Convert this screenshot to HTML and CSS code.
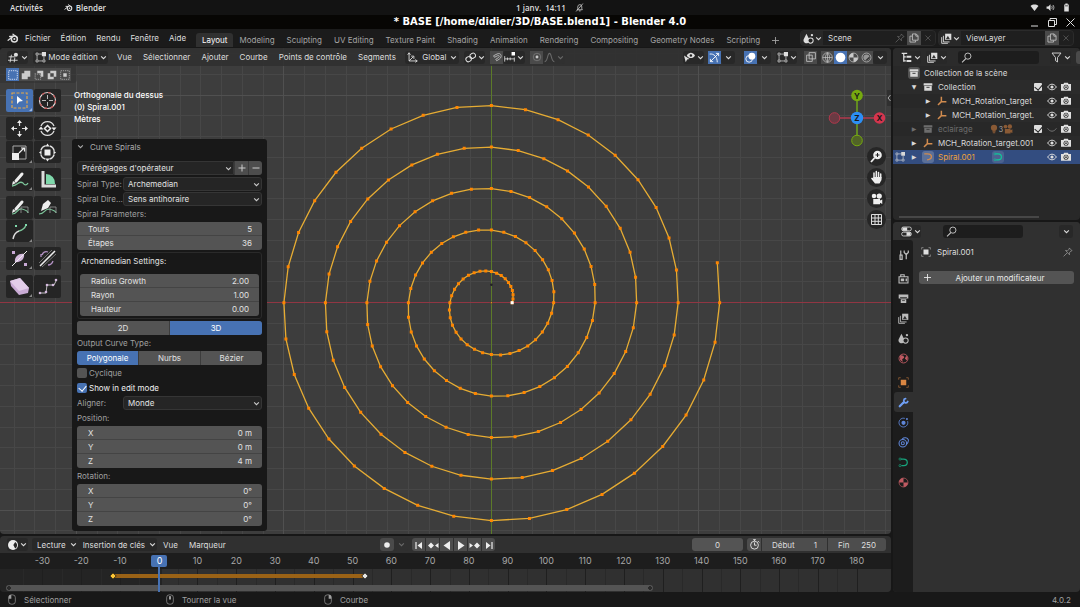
FILE: index.html
```html
<!DOCTYPE html>
<html lang="fr">
<head>
<meta charset="utf-8">
<title>* BASE [/home/didier/3D/BASE.blend1] - Blender 4.0</title>
<link rel="stylesheet" href="styles.css">
</head>
<body>
<svg class="defs" aria-hidden="true">
  <symbol id="blender" viewBox="0 0 16 16"><path d="M1.500 11 8 6H3.500M8 3l5 4" fill="none" stroke="currentColor" stroke-width="1.700" stroke-linecap="round" stroke-linejoin="round"/><circle cx="9.800" cy="9.300" r="4" fill="none" stroke="currentColor" stroke-width="2"/><circle cx="9.800" cy="9.300" r="1.400" fill="currentColor"/></symbol>
  <symbol id="chev" viewBox="0 0 8 8"><path d="M1.300 2.600 4 5.300l2.700-2.700" fill="none" stroke="currentColor" stroke-width="1.200"/></symbol>
  <symbol id="bell" viewBox="0 0 16 16"><path d="M4 12c1-1 1-3 1-5 0-2.500 1.300-4 3.500-4S12 4.500 12 7c0 2 0 4 1 5zM7 14h3M2 15 14 1" fill="none" stroke="currentColor" stroke-width="1.300"/></symbol>
  <symbol id="wifi" viewBox="0 0 16 16"><path d="M8 14 1 5.500C5 2 11 2 15 5.500z" fill="currentColor"/></symbol>
  <symbol id="sound" viewBox="0 0 16 16"><path d="M1 6h3l4-4v12l-4-4H1z" fill="currentColor"/><path d="M10 5.500c1.300 1.500 1.300 3.500 0 5M12.200 3.500c2.400 2.700 2.400 6.300 0 9" fill="none" stroke="currentColor" stroke-width="1.400"/></symbol>
  <symbol id="battery" viewBox="0 0 16 16"><path d="M6 1h4v1.500h2V15H4V2.500h2z" fill="currentColor"/><path d="M5.500 4h5v2h-5z" fill="#555"/></symbol>
  <symbol id="grid-editor" viewBox="0 0 16 16"><path d="M1 7h9M0 12h14M5 4 3 15M10 8l-1 7" fill="none" stroke="currentColor" stroke-width="1.300"/><circle cx="11.500" cy="4" r="3" fill="currentColor"/></symbol>
  <symbol id="edit-mode" viewBox="0 0 16 16"><path d="M5 3h6M3 5v6M5 13h6M13 6v5" fill="none" stroke="currentColor" stroke-width="1"/><path d="M1.500 1.500h3v3h-3zM1.500 11.500h3v3h-3zM11.500 11.500h3v3h-3z" fill="none" stroke="currentColor"/><path d="M10 0h6v6h-6z" fill="currentColor"/></symbol>
  <symbol id="axes" viewBox="0 0 16 16"><path d="M3 2v11h11M3 13l6-6M1 4l2-3 2 3M12 11l3 2-3 2M6 6h4v4" fill="none" stroke="currentColor" stroke-width="1.300"/></symbol>
  <symbol id="pivot" viewBox="0 0 16 16"><g fill="none" stroke="currentColor" stroke-width="1.500"><rect x="1" y="7" width="8" height="7" rx="3.500" transform="rotate(-30 5 10)"/><rect x="7" y="2" width="8" height="7" rx="3.500" transform="rotate(-30 11 5)"/></g><circle cx="8" cy="8" r="1.500" fill="currentColor"/></symbol>
  <symbol id="magnet" viewBox="0 0 16 16"><path d="M2.500 6 8 3.200c7-3 9 5 3.500 8.300l-4 2.500M4 8.500l5-2.600c3-1.200 3.500 1.500 1 3.200l-4 2.600M2.500 6 4 8.500M6 11.700 7.500 14" fill="none" stroke="currentColor" stroke-width="1.300"/></symbol>
  <symbol id="snap-inc" viewBox="0 0 16 16"><path d="M1 6v8M15 8v6M5 8v4M9 8v4M1 10h14" fill="none" stroke="currentColor" stroke-width="1.200"/><path d="M11 0h5v5h-5z" fill="#fff"/></symbol>
  <symbol id="prop" viewBox="0 0 16 16"><circle cx="8" cy="8" r="6" fill="none" stroke="currentColor" stroke-width=".5"/><circle cx="8" cy="8" r="2.300" fill="currentColor"/></symbol>
  <symbol id="falloff" viewBox="0 0 16 16"><path d="M1 14c5 0 3.500-12 7-12s2 12 7 12" fill="none" stroke="currentColor" stroke-width="1.500"/></symbol>
  <symbol id="visib" viewBox="0 0 16 16"><path d="M0 5l8 5-3.500 1L2.500 15z" fill="currentColor"/><path d="M4 5c3-5 9-5 12 0-3 5-9 5-12 0z" fill="currentColor"/><circle cx="10" cy="5" r="1.800" fill="#222"/></symbol>
  <symbol id="gizmo" viewBox="0 0 16 16"><path d="M1 3c6-1 11 4 11 12M2 14 14 2M10 2h4v4M2 10v4h4" fill="none" stroke="currentColor" stroke-width="1.300"/></symbol>
  <symbol id="overlay" viewBox="0 0 16 16"><circle cx="6" cy="10" r="4.800" fill="none" stroke="currentColor" stroke-width="1.300"/><circle cx="10" cy="6" r="5" fill="currentColor"/></symbol>
  <symbol id="xray" viewBox="0 0 16 16"><path d="M1 5h9v10H1zM5 1h10v10H5z" fill="none" stroke="currentColor" stroke-width="1.300"/></symbol>
  <symbol id="wire" viewBox="0 0 16 16"><path d="M8 1v14M1 8h14M8 1c-4 4-4 10 0 14M8 1c4 4 4 10 0 14" fill="none" stroke="currentColor"/><circle cx="8" cy="8" r="7" fill="none" stroke="currentColor"/></symbol>
  <symbol id="solid" viewBox="0 0 16 16"><circle cx="8" cy="8" r="7" fill="#fff"/></symbol>
  <symbol id="matprev" viewBox="0 0 16 16"><circle cx="8" cy="8" r="6.500" fill="none" stroke="currentColor"/><path d="M8 8V1.500A6.500 6.500 0 0 0 1.500 8zM8 8h6.500A6.500 6.500 0 0 1 8 14.500z" fill="currentColor"/></symbol>
  <symbol id="rendered" viewBox="0 0 16 16"><circle cx="8" cy="8" r="6.500" fill="none" stroke="currentColor"/><circle cx="8" cy="8" r="4.500" fill="currentColor" opacity=".6"/><path d="M6 12.500 12.500 6v3L9 12.500z" fill="#333"/></symbol>
  <symbol id="copy" viewBox="0 0 16 16"><path d="M5.500 1.500h6l3 3v7h-9zM11 1.500V5h3.500M5 5H1.500v9.500h9V12" fill="none" stroke="currentColor" stroke-width="1.300"/></symbol>
  <symbol id="x" viewBox="0 0 16 16"><path d="M3 3l10 10M13 3 3 13" stroke="currentColor" stroke-width="1.300"/></symbol>
  <symbol id="pin" viewBox="0 0 16 16"><path d="M10 1.500 14.500 6l-2 .500-2.500 3 .500 3L4 5.500l3 .500 3-2.500zM6.500 9.500 1 15" fill="none" stroke="currentColor" stroke-width="1.200"/></symbol>
  <symbol id="scene" viewBox="0 0 16 16"><path d="M5 1l4 8c1 3-1 6-4 6s-5-3-4-6z" fill="currentColor"/><circle cx="11" cy="11" r="3.800" fill="#222" stroke="currentColor" stroke-width="1.500"/><circle cx="13" cy="3" r="1.700" fill="currentColor"/></symbol>
  <symbol id="layers" viewBox="0 0 16 16"><path d="M1 6v9h9M3.500 4v9h9" fill="none" stroke="currentColor" stroke-width="1.300"/><path d="M6 1h9v9H6z" fill="currentColor"/><path d="M7 9l3-5 3 5z" fill="#333"/></symbol>
  <symbol id="tree" viewBox="0 0 16 16"><path d="M1 2h8M4 3v11M4 7h3M4 13h3" fill="none" stroke="currentColor" stroke-width="1.800"/><path d="M8 5.500h7v3H8zM8 11.500h7v3H8z" fill="currentColor"/></symbol>
  <symbol id="lens" viewBox="0 0 16 16"><circle cx="10" cy="6" r="4.500" fill="none" stroke="currentColor" stroke-width="1.300"/><path d="M7 9.500 1.500 15" stroke="currentColor" stroke-width="1.500"/></symbol>
  <symbol id="funnel" viewBox="0 0 16 16"><path d="M1.500 1.500h13L9.500 8v6.500l-3-2V8z" fill="none" stroke="currentColor" stroke-width="1.300"/></symbol>
  <symbol id="coll" viewBox="0 0 16 16"><path d="M1 2h14v3.500H1zM2 6.500h12V14H2z" fill="currentColor"/><path d="M5.500 8.500h5" stroke="#333" stroke-width="1.500"/></symbol>
  <symbol id="empty" viewBox="0 0 16 16"><path d="M7 1v8h8M7 9l-5.500 5.500" fill="none" stroke="currentColor" stroke-width="2.400"/></symbol>
  <symbol id="curve" viewBox="0 0 16 16"><path d="M2 3h5c4.500 0 6.500 1.800 6.500 4.500S11 12 6.500 12.500" fill="none" stroke="currentColor" stroke-width="2.200"/></symbol>
  <symbol id="curvedata" viewBox="0 0 16 16"><path d="M4 3h4c3.500 0 5.500 2 5.500 5s-2.500 4.500-5 4.500H5" fill="none" stroke="currentColor" stroke-width="1.800"/><circle cx="3" cy="3" r="1.600" fill="none" stroke="currentColor"/><circle cx="3" cy="12.500" r="1.600" fill="none" stroke="currentColor"/></symbol>
  <symbol id="eye" viewBox="0 0 16 16"><path d="M1 8c4-6 10-6 14 0-4 6-10 6-14 0z" fill="none" stroke="currentColor" stroke-width="1.500"/><circle cx="8" cy="8" r="2.500" fill="currentColor"/></symbol>
  <symbol id="eye-off" viewBox="0 0 16 16"><path d="M1 7c4 6 10 6 14 0" fill="none" stroke="currentColor" stroke-width="1.500"/></symbol>
  <symbol id="cam" viewBox="0 0 16 16"><path d="M0 3h4l1-2h6l1 2h4v11H0z" fill="currentColor"/><circle cx="8" cy="8.300" r="4" fill="#333"/><circle cx="8" cy="8.300" r="2.200" fill="none" stroke="currentColor" stroke-width="1.500"/></symbol>
  <symbol id="movie" viewBox="0 0 16 16"><circle cx="4" cy="4" r="3" fill="currentColor"/><circle cx="11" cy="4" r="3.500" fill="currentColor"/><path d="M3 8h9v2l3-1.500v6L12 13v2H3z" fill="currentColor"/></symbol>
  <symbol id="bulb" viewBox="0 0 16 16"><circle cx="8" cy="6" r="5" fill="currentColor"/><path d="M5.500 11.500h5M6 14h4" stroke="currentColor" stroke-width="1.800"/></symbol>
  <symbol id="props" viewBox="0 0 16 16"><rect x="1" y="1.500" width="14" height="5.500" rx="2.500" fill="none" stroke="currentColor" stroke-width="1.200"/><rect x="1" y="9" width="14" height="5.500" rx="2.500" fill="none" stroke="currentColor" stroke-width="1.200"/><path d="M2 2h7v5H2zM8 9h6v5H8z" fill="currentColor"/></symbol>
  <symbol id="tool" viewBox="0 0 16 16"><path d="M4 2v6M3 9h3v6H3zM12 8v7" stroke="currentColor" stroke-width="1.800" fill="none"/><path d="M9 2v3l3 3 3-3V2" fill="none" stroke="currentColor" stroke-width="1.800"/></symbol>
  <symbol id="render" viewBox="0 0 16 16"><path d="M1.500 5.500h13v9h-13zM4 5V2.500h5V5" fill="none" stroke="currentColor" stroke-width="1.600"/><path d="M4 8h5v4H4zM11 8h2v4h-2z" fill="currentColor"/></symbol>
  <symbol id="output" viewBox="0 0 16 16"><path d="M1 2h14v6H1zM4 9h8v5.500H4z" fill="currentColor"/><path d="M3 6.500h10M6 11h4" stroke="#333" stroke-width="1.200"/></symbol>
  <symbol id="world" viewBox="0 0 16 16"><circle cx="8" cy="8" r="6.500" fill="none" stroke="currentColor" stroke-width="1.300"/><path d="M3 3l5 1 1 3-3 2 1 4-4-3zM12 4l2 3-1 4-3-3z" fill="currentColor"/></symbol>
  <symbol id="object" viewBox="0 0 16 16"><path d="M4 4h8v8H4z" fill="currentColor"/><path d="M1 4V1h3M12 1h3v3M15 12v3h-3M4 15H1v-3" fill="none" stroke="currentColor" opacity=".7"/></symbol>
  <symbol id="wrench" viewBox="0 0 16 16"><path d="M2.500 13.500 8 8" stroke="currentColor" stroke-width="3.200" stroke-linecap="round"/><path d="M11 2.500a3 3 0 1 0 3.200 4" fill="none" stroke="currentColor" stroke-width="2.600" stroke-linecap="round"/></symbol>
  <symbol id="physics" viewBox="0 0 16 16"><path d="M10 2a6.500 6.500 0 1 0 4 4" fill="none" stroke="currentColor" stroke-width="1.200"/><circle cx="8" cy="8.500" r="3" fill="currentColor"/><circle cx="13" cy="3" r="1.500" fill="currentColor"/></symbol>
  <symbol id="constraint" viewBox="0 0 16 16"><circle cx="7" cy="9" r="5.500" fill="none" stroke="currentColor" stroke-width="1.500"/><circle cx="7" cy="9" r="2.200" fill="none" stroke="currentColor" stroke-width="1.500"/><path d="M6 3c3-3 8-2 9 1s-1 5-3 7" fill="none" stroke="currentColor" stroke-width="1.500"/></symbol>
  <symbol id="clock" viewBox="0 0 16 16"><circle cx="8" cy="8" r="8" fill="#eee"/><path d="M11.500 3 8.500 8l3 5.500c4-2.500 4-8 0-10.500z" fill="#282828"/></symbol>
  <symbol id="stopwatch" viewBox="0 0 16 16"><circle cx="8" cy="9" r="5.700" fill="none" stroke="currentColor" stroke-width="1.400"/><path d="M8 5v4h3M6 1h4M8 1v2M13 3l2 2" fill="none" stroke="currentColor" stroke-width="1.400"/></symbol>
  <symbol id="mouse-l" viewBox="0 0 12 16"><rect x="1" y="1" width="10" height="14" rx="4" fill="none" stroke="currentColor"/><path d="M1 7V4q0-3 4-3v6z" fill="currentColor"/></symbol>
  <symbol id="mouse-m" viewBox="0 0 12 16"><rect x="1" y="1" width="10" height="14" rx="4" fill="none" stroke="currentColor"/><rect x="4.500" y="3" width="3" height="5" fill="currentColor"/></symbol>
  <symbol id="mouse-r" viewBox="0 0 12 16"><rect x="1" y="1" width="10" height="14" rx="4" fill="none" stroke="currentColor"/><path d="M11 7V4q0-3-4-3v6z" fill="currentColor"/></symbol>
</svg>

<header class="gnome">
  <button>Activités</button>
  <button class="gnome-app"><svg class="i9"><use href="#blender"/></svg>Blender</button>
  <div class="gnome-clock"><time>1 janv.&nbsp; 14:11</time><svg class="i9"><use href="#bell"/></svg></div>
  <div class="gnome-status"><svg class="i9"><use href="#wifi"/></svg><svg class="i9"><use href="#sound"/></svg><svg class="i9"><use href="#battery"/></svg></div>
</header>

<div class="titlebar">
  <h1>* BASE [/home/didier/3D/BASE.blend1] - Blender 4.0</h1>
  <div class="win">
    <button aria-label="Réduire"><svg class="i9" viewBox="0 0 9 9"><path d="M1 8h7" stroke="#ddd"/></svg></button>
    <button aria-label="Agrandir"><svg class="i9" viewBox="0 0 9 9"><path d="M.5 2.500h6v6h-6zM2 2.500v-2h6.500v6h-2" fill="none" stroke="#ddd"/></svg></button>
    <button aria-label="Fermer"><svg class="i9" viewBox="0 0 9 9"><path d="M.5.500l8 8M8.500.500l-8 8" stroke="#ddd"/></svg></button>
  </div>
</div>

<nav class="topbar">
  <svg class="logo"><use href="#blender"/></svg>
  <div class="menus"><button>Fichier</button><button>Édition</button><button>Rendu</button><button>Fenêtre</button><button>Aide</button></div>
  <div class="tabs">
    <button class="on">Layout</button><button>Modeling</button><button>Sculpting</button><button>UV Editing</button><button>Texture Paint</button><button>Shading</button><button>Animation</button><button>Rendering</button><button>Compositing</button><button>Geometry Nodes</button><button>Scripting</button><button class="plus" aria-label="Ajouter un espace"><svg class="i7" viewBox="0 0 8 8"><path d="M4 0v8M0 4h8" stroke="currentColor"/></svg></button>
  </div>
  <div class="idblock">
    <button class="id-type" aria-label="Scène"><svg class="i11"><use href="#scene"/></svg><svg class="chev"><use href="#chev"/></svg></button>
    <input value="Scene" aria-label="Nom de la scène">
    <button class="ghost" aria-label="Épingler"><svg class="i10"><use href="#pin"/></svg></button>
    <button class="lit" aria-label="Nouvelle scène"><svg class="i10"><use href="#copy"/></svg></button>
    <button class="ghost" aria-label="Supprimer"><svg class="i8"><use href="#x"/></svg></button>
  </div>
  <div class="idblock">
    <button class="id-type" aria-label="Calque"><svg class="i11"><use href="#layers"/></svg><svg class="chev"><use href="#chev"/></svg></button>
    <input value="ViewLayer" aria-label="Nom du calque">
    <button class="lit" aria-label="Nouveau calque"><svg class="i10"><use href="#copy"/></svg></button>
    <button class="ghost" aria-label="Supprimer"><svg class="i8"><use href="#x"/></svg></button>
  </div>
</nav>

<main class="workspace">
  <div class="left">
    <section class="viewport area">
      <svg class="scene" id="scene-view" viewBox="0 0 891 486" preserveAspectRatio="xMidYMid slice"></svg>

      <div class="vheader">
        <button class="box wide" aria-label="Type d'éditeur"><svg class="i11"><use href="#grid-editor"/></svg><svg class="chev"><use href="#chev"/></svg></button>
        <button class="box mode"><svg class="i11"><use href="#edit-mode"/></svg><span>Mode édition</span><svg class="chev"><use href="#chev"/></svg></button>
        <div class="vmenus"><button>Vue</button><button>Sélectionner</button><button>Ajouter</button><button>Courbe</button><button>Points de contrôle</button><button>Segments</button></div>
        <div class="vmid">
          <button class="box orient"><svg class="i11"><use href="#axes"/></svg><span>Global</span><svg class="chev"><use href="#chev"/></svg></button>
          <button class="box wide" aria-label="Pivot"><svg class="i11"><use href="#pivot"/></svg><svg class="chev"><use href="#chev"/></svg></button>
          <div class="pair"><button class="sq lit" aria-label="Aimanter"><svg class="i10"><use href="#magnet"/></svg></button><button class="box" aria-label="Incrément"><svg class="i11"><use href="#snap-inc"/></svg><svg class="chev"><use href="#chev"/></svg></button></div>
          <div class="pair"><button class="sq lit" aria-label="Édition proportionnelle"><svg class="i10"><use href="#prop"/></svg></button><button class="box dim" aria-label="Atténuation"><svg class="i11"><use href="#falloff"/></svg><svg class="chev"><use href="#chev"/></svg></button></div>
        </div>
        <div class="vright">
          <button class="box wide" aria-label="Visibilité"><svg class="i11"><use href="#visib"/></svg><svg class="chev"><use href="#chev"/></svg></button>
          <div class="pair"><button class="sq blue" aria-label="Gizmos"><svg class="i11"><use href="#gizmo"/></svg></button><button class="box arrow" aria-label="Options des gizmos"><svg class="chev"><use href="#chev"/></svg></button></div>
          <div class="pair gapped"><button class="sq blue" aria-label="Surimpressions"><svg class="i11"><use href="#overlay"/></svg></button><button class="box arrow" aria-label="Options des surimpressions"><svg class="chev"><use href="#chev"/></svg></button></div>
          <button class="box wide" aria-label="Surimpression d'édition"><svg class="i11"><use href="#edit-mode"/></svg><svg class="chev"><use href="#chev"/></svg></button>
          <button class="sq lit xr" aria-label="Rayons X"><svg class="i10"><use href="#xray"/></svg></button>
          <div class="pair"><button class="sq lit" aria-label="Filaire"><svg class="i11"><use href="#wire"/></svg></button><button class="sq blue" aria-label="Solide"><svg class="i11"><use href="#solid"/></svg></button><button class="sq lit" aria-label="Matériau"><svg class="i11"><use href="#matprev"/></svg></button><button class="sq lit" aria-label="Rendu"><svg class="i11"><use href="#rendered"/></svg></button><button class="box arrow" aria-label="Options d'ombrage"><svg class="chev"><use href="#chev"/></svg></button></div>
        </div>
      </div>

      <div class="selmodes">
        <button class="on" aria-label="Définir"><svg viewBox="0 0 14 14"><path d="M2 2h10v10H2z" fill="none" stroke="#dfe8f8" stroke-dasharray="1.500 1"/></svg></button>
        <button aria-label="Étendre"><svg viewBox="0 0 14 14"><path d="M5 2h7v7H9v3H2V5h3z" fill="#ccc"/></svg></button>
        <button aria-label="Soustraire"><svg viewBox="0 0 14 14"><path d="M5 2h7v7H9V5H5z" fill="#ccc"/><path d="M2.500 5v7H9V6H3" fill="none" stroke="#aaa" stroke-dasharray="1.500 1"/></svg></button>
        <button aria-label="Inverser"><svg viewBox="0 0 14 14"><path d="M5 2h7v7H9v3H2V5h3zM5 5v4h4V5z" fill="#ccc" fill-rule="evenodd"/></svg></button>
        <button aria-label="Intersecter"><svg viewBox="0 0 14 14"><path d="M2 2h10v10H2z" fill="none" stroke="#aaa" stroke-dasharray="1.500 1"/><path d="M5 5h4v4H5z" fill="#ccc"/></svg></button>
      </div>

      <div class="viewtext"><span>Orthogonale du dessus</span><span>(0) Spiral.001</span><span>Mètres</span></div>

      <div class="tools">
        <div class="tgroup">
          <button class="on" aria-label="Sélection"><svg viewBox="0 0 27 23"><path d="M6 4h15v15H6z" fill="none" stroke="#e5a74a" stroke-width="1.200" stroke-dasharray="3 1.500"/><path d="M11 7l6 5-3.500.500L11 15z" fill="#fff"/><path d="M26 19v3h-3z" fill="#9db6dd"/></svg></button>
          <button aria-label="Curseur"><svg viewBox="0 0 27 23"><circle cx="13.500" cy="11.500" r="8" fill="none" stroke="#ddd" stroke-width="1.200"/><circle cx="13.500" cy="11.500" r="8" fill="none" stroke="#c55" stroke-width="1.200" stroke-dasharray="3 3.300"/><path d="M13.500 6v4M13.500 13v4M8 11.500h4M15 11.500h4" stroke="#bbb"/></svg></button>
        </div>
        <div class="tgroup">
          <button aria-label="Déplacer"><svg viewBox="0 0 27 23"><path d="M13.500 6v3M13.500 14v3M8 11.500h3M16 11.500h3" stroke="#ddd" stroke-width="1.200"/><path d="M13.500 3l2.500 3h-5zM13.500 20l2.500-3h-5zM5 11.500l3-2.500v5zM22 11.500 19 9v5z" fill="#eee"/></svg></button>
          <button aria-label="Tourner"><svg viewBox="0 0 27 23"><path d="M7 9a7 7 0 0 1 13 0M20 14a7 7 0 0 1-13 0" fill="none" stroke="#ddd" stroke-width="1.300"/><path d="M13.500 8.500l3 3-3 3-3-3z" fill="none" stroke="#eee" stroke-width="1.500"/><path d="M4.500 12.500h5L7 9.500zM17.500 10.500h5L20 13.500z" fill="#eee"/></svg></button>
          <button aria-label="Échelle"><svg viewBox="0 0 27 23"><path d="M7 5h13v13H7z" fill="none" stroke="#aaa"/><path d="M6 12h7v7H6z" fill="#eee"/><path d="M13 12l5-5M15 7h3.500v3.500" fill="none" stroke="#eee" stroke-width="1.200"/><path d="M26 19v3h-3z" fill="#888"/></svg></button>
          <button aria-label="Transformer"><svg viewBox="0 0 27 23"><circle cx="13.500" cy="11.500" r="7" fill="none" stroke="#ddd" stroke-width="1.300" stroke-dasharray="7 4" stroke-dashoffset="-2"/><path d="M10.500 8.500h6v6h-6zM13.500 2.500l2 3h-4zM13.500 20.500l2-3h-4zM5 11.500l2.500-2v4zM22 11.500l-2.500-2v4z" fill="#eee"/></svg></button>
        </div>
        <div class="tgroup">
          <button aria-label="Annoter"><svg viewBox="0 0 27 23"><path d="M10 13 16 6" stroke="#eee" stroke-width="3" stroke-linecap="round"/><path d="M6 17l1-4 3 2z" fill="#eee"/><path d="M6 18c7-1 7-6 11-3 2 3 4 2 5 0" fill="none" stroke="#7cc59a" stroke-width="1.300"/><path d="M26 19v3h-3z" fill="#888"/></svg></button>
          <button aria-label="Mesurer"><svg viewBox="0 0 27 23"><path d="M9 3v15h13" fill="none" stroke="#ddd" stroke-width="3"/><path d="M12 6a9 9 0 0 1 9 10h-9z" fill="#7fd8ab"/></svg></button>
        </div>
        <div class="tgroup">
          <button aria-label="Dessiner"><svg viewBox="0 0 27 23"><path d="M10 13 16 6" stroke="#eee" stroke-width="3" stroke-linecap="round"/><path d="M6 18c6 0 5-6 10-5 4 1 6 2 6 4" fill="none" stroke="#7cc59a" stroke-width="1.200"/><path d="M15 17v-6h7v6" fill="none" stroke="#999" stroke-width=".8"/><path d="M6 17l1-4 3 2z" fill="#eee"/></svg></button>
          <button aria-label="Plume"><svg viewBox="0 0 27 23"><path d="M7 15l2-7 5-4 3 3-3 5z" fill="#eee"/><path d="M5 18c6 0 5-5 10-5 4 1 7 2 7 4" fill="none" stroke="#7cc59a" stroke-width="1.200"/><path d="M16 17v-6h6v6" fill="none" stroke="#999" stroke-width=".8"/></svg></button>
          <button aria-label="Extruder"><svg viewBox="0 0 27 23"><path d="M7 19c1-5 3-7 6-8" fill="none" stroke="#ddd" stroke-width="1.400"/><path d="M13 11c4-1 6-3 7-6" fill="none" stroke="#7cc59a" stroke-width="1.400"/><path d="M9 5h2v2H9zM19 4h2v2h-2z" fill="#7fd8ab"/><path d="M26 19v3h-3z" fill="#888"/></svg></button>
        </div>
        <div class="tgroup">
          <button aria-label="Rayon"><svg viewBox="0 0 27 23"><path d="M9 15c-1-5 4-9 9-8 1 5-4 9-9 8z" fill="#d4b9dd"/><path d="M6 19 21 4" stroke="#eee"/><path d="M6 4h3v3H6zM18 16h3v3h-3z" fill="#c9a9d6"/><path d="M26 19v3h-3z" fill="#888"/></svg></button>
          <button aria-label="Inclinaison"><svg viewBox="0 0 27 23"><path d="M6 19 21 4" stroke="#eee" stroke-width="1.500"/><path d="M8 20 22 7M5 16 18 3" stroke="#888" stroke-width=".8"/><path d="M8 8c1-3 3-4 6-3M19 14c-1 3-3 4-5 4M7 7v3" fill="none" stroke="#b391c4" stroke-width="1.300"/></svg></button>
        </div>
        <div class="tgroup">
          <button aria-label="Cisailler"><svg viewBox="0 0 27 23"><path d="M4 6l10-3 9 10-1 5-9 2L5 11z" fill="#c9abd5"/><path d="M4 6l10-3 9 10-10 3z" fill="#e2cde9"/><path d="M26 19v3h-3z" fill="#888"/></svg></button>
          <button aria-label="Aléatoire"><svg viewBox="0 0 27 23"><path d="M6 18h6l1-8 7 0 2-4" fill="none" stroke="#bbb"/><g fill="#d4b9dd"><circle cx="6" cy="18" r="1.300"/><circle cx="12" cy="17" r="1.300"/><circle cx="13" cy="10" r="1.300"/><circle cx="19" cy="10" r="1.300"/><circle cx="22" cy="5" r="1.300"/></g></svg></button>
        </div>
      </div>

      <form class="oppanel">
        <h2><svg class="chev"><use href="#chev"/></svg>Curve Spirals</h2>
        <div class="row preset"><select aria-label="Préréglages"><option>Préréglages d'opérateur</option></select><button type="button" aria-label="Ajouter"><svg class="i8" viewBox="0 0 8 8"><path d="M4 .5v7M.5 4h7" stroke="#ccc"/></svg></button><button type="button" aria-label="Retirer"><svg class="i8" viewBox="0 0 8 8"><path d="M.5 4h7" stroke="#ccc"/></svg></button></div>
        <div class="row prop1"><label for="st">Spiral Type:</label><select id="st"><option>Archemedian</option></select></div>
        <div class="row prop1"><label for="sd">Spiral Dire...</label><select id="sd"><option>Sens antihoraire</option></select></div>
        <p>Spiral Parameters:</p>
        <div class="nums"><label>Tours<input value="5"></label><label>Étapes<input value="36"></label></div>
        <fieldset>
          <legend>Archemedian Settings:</legend>
          <div class="nums"><label>Radius Growth<input value="2.00"></label><label>Rayon<input value="1.00"></label><label>Hauteur<input value="0.00"></label></div>
        </fieldset>
        <div class="seg"><button type="button">2D</button><button type="button" class="on">3D</button></div>
        <p>Output Curve Type:</p>
        <div class="seg"><button type="button" class="on">Polygonale</button><button type="button">Nurbs</button><button type="button">Bézier</button></div>
        <label class="check"><input type="checkbox">Cyclique</label>
        <label class="check lit-text"><input type="checkbox" checked>Show in edit mode</label>
        <div class="row prop1"><label for="al">Aligner:</label><select id="al"><option>Monde</option></select></div>
        <p>Position:</p>
        <div class="nums"><label>X<input value="0 m"></label><label>Y<input value="0 m"></label><label>Z<input value="4 m"></label></div>
        <p>Rotation:</p>
        <div class="nums"><label>X<input value="0°"></label><label>Y<input value="0°"></label><label>Z<input value="0°"></label></div>
      </form>

      <svg class="navgizmo" viewBox="0 0 60 60">
        <path d="M30 30V8" stroke="#6fa51b" stroke-width="1.500"/><path d="M30 30v22" stroke="#6fa51b" stroke-width="1.500"/><path d="M7 30h45" stroke="#b2384c" stroke-width="1.500"/>
        <circle cx="30" cy="7.500" r="5.800" fill="#76a90f"/><circle cx="52.500" cy="30" r="5.800" fill="#d4354e"/>
        <circle cx="7.500" cy="30" r="5.300" fill="#6b3a43" stroke="#b2384c"/><circle cx="30" cy="52.500" r="5.300" fill="#516427" stroke="#76a90f"/>
        <circle cx="30" cy="30" r="6.200" fill="#2c8ff5"/>
        <g class="axis"><text x="30" y="10.500">Y</text><text x="52.500" y="33">X</text><text x="30" y="33">Z</text></g>
      </svg>
      <div class="navbtns">
        <button aria-label="Zoom"><svg viewBox="0 0 19 19"><circle cx="10.500" cy="8" r="4.300" fill="#eee"/><path d="M8.500 8h4M10.500 6v4" stroke="#222"/><path d="M7.500 11 4 15" stroke="#eee" stroke-width="1.800"/></svg></button>
        <button aria-label="Déplacer la vue"><svg viewBox="0 0 19 19"><path d="M7 10V5M9.300 9V3.500M11.500 9V4.500M13.700 10V6" stroke="#eee" stroke-width="1.500" stroke-linecap="round"/><path d="M6.300 9h8.200v3l-2 3.500H8L4 10.500l1-1 1.500 1z" fill="#eee"/></svg></button>
        <button aria-label="Caméra"><svg class="i12"><use href="#movie"/></svg></button>
        <button aria-label="Perspective"><svg viewBox="0 0 19 19"><path d="M4.500 4.500h10v10h-10zM8 4.500v10M11.300 4.500v10M4.500 8h10M4.500 11.300h10" fill="none" stroke="#ddd"/></svg></button>
      </div>
      <button class="expander" aria-label="Panneau latéral"><svg viewBox="0 0 4 8"><path d="M3.500 1 1 4l2.500 3" fill="none" stroke="#aaa"/></svg></button>
    </section>

    <section class="timeline area">
      <div class="theader">
        <button class="box wide" aria-label="Type d'éditeur"><svg class="i10"><use href="#clock"/></svg><svg class="chev"><use href="#chev"/></svg></button>
        <div class="tdrops"><button class="box">Lecture<svg class="chev"><use href="#chev"/></svg></button><button class="box">Insertion de clés<svg class="chev"><use href="#chev"/></svg></button></div>
        <div class="vmenus"><button>Vue</button><button>Marqueur</button></div>
        <div class="transport">
          <button class="lit rec" aria-label="Clés automatiques"><svg class="i8" viewBox="0 0 8 8"><circle cx="4" cy="4" r="2.800" fill="#eee"/></svg></button>
          <button class="box dim arrow" aria-label="Options"><svg class="chev"><use href="#chev"/></svg></button>
          <div class="play">
            <button aria-label="Début"><svg viewBox="0 0 14 14"><path d="M4 4v7" stroke="#eee" stroke-width="1.200"/><path d="M10 4v7L5.500 7.500z" fill="#eee"/></svg></button>
            <button aria-label="Clé précédente"><svg viewBox="0 0 14 14"><path d="M5 4.500l3 3-3 3-3-3zM12.500 5v5l-3.500-2.500z" fill="#eee"/></svg></button>
            <button aria-label="Lecture arrière"><svg viewBox="0 0 14 14"><path d="M10 3v9L3.500 7.500z" fill="#eee"/></svg></button>
            <button aria-label="Lecture"><svg viewBox="0 0 14 14"><path d="M4 3v9l6.500-4.500z" fill="#eee"/></svg></button>
            <button aria-label="Clé suivante"><svg viewBox="0 0 14 14"><path d="M9 4.500l3 3-3 3-3-3zM1.500 5v5L5 7.500z" fill="#eee"/></svg></button>
            <button aria-label="Fin"><svg viewBox="0 0 14 14"><path d="M10 4v7" stroke="#eee" stroke-width="1.200"/><path d="M4 4v7l4.500-3.500z" fill="#eee"/></svg></button>
          </div>
        </div>
        <div class="frames">
          <input class="cur" value="0" aria-label="Image actuelle">
          <div class="range"><button aria-label="Plage"><svg class="i11"><use href="#stopwatch"/></svg></button><label>Début<input value="1"></label><label>Fin<input value="250"></label></div>
        </div>
      </div>
      <div class="ruler" id="ruler"></div>
      <div class="track"><div class="lines" id="lines"></div>
        <div class="keybar"></div>
        <svg class="key first" viewBox="0 0 8 8"><path d="M4 .8 7.200 4 4 7.200.8 4z" fill="#ffc736" stroke="#111" stroke-width=".8"/></svg>
        <svg class="key last" viewBox="0 0 8 8"><path d="M4 .8 7.200 4 4 7.200.8 4z" fill="#e6e6e6" stroke="#111" stroke-width=".8"/></svg>
        <div class="tscroll"></div>
      </div>
      <div class="playhead"><span>0</span></div>
    </section>
  </div>

  <div class="right">
    <section class="outliner area">
      <div class="oheader">
        <button class="box wide" aria-label="Type d'éditeur"><svg class="i11"><use href="#tree"/></svg><svg class="chev"><use href="#chev"/></svg></button>
        <button class="box wide" aria-label="Affichage"><svg class="i11"><use href="#layers"/></svg><svg class="chev"><use href="#chev"/></svg></button>
        <label class="search"><svg class="i11"><use href="#lens"/></svg><input aria-label="Rechercher"></label>
        <button class="box wide" aria-label="Filtre"><svg class="i11"><use href="#funnel"/></svg><svg class="chev"><use href="#chev"/></svg></button>
        <span class="cut"></span>
      </div>
      <ul class="tree">
        <li><span class="gut"></span><svg class="i12 hl"><use href="#coll"/></svg><span class="nm">Collection de la scène</span></li>
        <li><span class="gut"></span><span class="tri">▼</span><svg class="i12"><use href="#coll"/></svg><span class="nm">Collection</span><span class="tg"><input type="checkbox" checked aria-label="Inclure"><svg class="i10"><use href="#eye"/></svg><svg class="i10"><use href="#cam"/></svg></span></li>
        <li class="child"><span class="gut"></span><span class="tri">▶</span><svg class="i12 or"><use href="#empty"/></svg><span class="nm">MCH_Rotation_target</span><span class="tg"><svg class="i10"><use href="#eye"/></svg><svg class="i10"><use href="#cam"/></svg></span></li>
        <li class="child"><span class="gut"></span><span class="tri">▶</span><svg class="i12 or"><use href="#empty"/></svg><span class="nm">MCH_Rotation_target.</span><span class="tg"><svg class="i10"><use href="#eye"/></svg><svg class="i10"><use href="#cam"/></svg></span></li>
        <li class="off"><span class="gut"></span><span class="tri">▶</span><svg class="i12"><use href="#coll"/></svg><span class="nm">eclairage</span><span class="counts"><svg class="i10"><use href="#bulb"/></svg><small>3</small><svg class="i10"><use href="#movie"/></svg></span><span class="tg"><input type="checkbox" checked aria-label="Inclure"><svg class="i10"><use href="#eye-off"/></svg><svg class="i10"><use href="#cam"/></svg></span></li>
        <li><span class="gut"></span><span class="tri">▶</span><svg class="i12 or"><use href="#empty"/></svg><span class="nm">MCH_Rotation_target.001</span><span class="tg"><svg class="i10"><use href="#eye"/></svg><svg class="i10"><use href="#cam"/></svg></span></li>
        <li class="sel"><span class="gut"><svg class="i10"><use href="#edit-mode"/></svg></span><span class="tri">▶</span><svg class="i12 or hl"><use href="#curve"/></svg><span class="nm">Spiral.001</span><svg class="i12 data"><use href="#curvedata"/></svg><span class="tg"><svg class="i10"><use href="#eye"/></svg><svg class="i10"><use href="#cam"/></svg></span></li>
      </ul>
      <div class="oscroll"></div>
    </section>

    <section class="properties area">
      <div class="pheader">
        <button class="box wide" aria-label="Type d'éditeur"><svg class="i11"><use href="#props"/></svg><svg class="chev"><use href="#chev"/></svg></button>
        <label class="search"><svg class="i11"><use href="#lens"/></svg><input aria-label="Rechercher"></label>
        <button class="box arrow" aria-label="Options"><svg class="chev"><use href="#chev"/></svg></button>
      </div>
      <div class="pbody">
        <nav class="ptabs">
          <button aria-label="Outil"><svg class="i11"><use href="#tool"/></svg></button>
          <button class="sp" aria-label="Rendu"><svg class="i11"><use href="#render"/></svg></button>
          <button aria-label="Sortie"><svg class="i11"><use href="#output"/></svg></button>
          <button aria-label="Calque de vue"><svg class="i11"><use href="#layers"/></svg></button>
          <button aria-label="Scène"><svg class="i11"><use href="#scene"/></svg></button>
          <button class="red" aria-label="Monde"><svg class="i11"><use href="#world"/></svg></button>
          <button class="sp orange" aria-label="Objet"><svg class="i11"><use href="#object"/></svg></button>
          <button class="on" aria-label="Modificateurs"><svg class="i11"><use href="#wrench"/></svg></button>
          <button class="bl" aria-label="Physique"><svg class="i11"><use href="#physics"/></svg></button>
          <button class="bl" aria-label="Contraintes"><svg class="i11"><use href="#constraint"/></svg></button>
          <button class="green" aria-label="Données"><svg class="i11"><use href="#curvedata"/></svg></button>
          <button class="red" aria-label="Matériau"><svg class="i11"><use href="#matprev"/></svg></button>
        </nav>
        <div class="pcontent">
          <div class="crumb"><svg class="i10"><use href="#object"/></svg><span>Spiral.001</span><svg class="i10 pn"><use href="#pin"/></svg></div>
          <button class="addmod"><svg class="i7" viewBox="0 0 8 8"><path d="M4 0v8M0 4h8" stroke="currentColor" stroke-width="1"/></svg><span>Ajouter un modificateur</span></button>
        </div>
      </div>
    </section>
  </div>
</main>

<footer class="status">
  <span><svg class="m"><use href="#mouse-l"/></svg>Sélectionner</span>
  <span><svg class="m"><use href="#mouse-m"/></svg>Tourner la vue</span>
  <span><svg class="m"><use href="#mouse-r"/></svg>Courbe</span>
  <span class="ver">4.0.2</span>
</footer>
<script src="app.js"></script>
</body>
</html>
```

FILE: styles.css
```css
* { box-sizing: border-box; }
body {
  margin: 0; height: 100vh; display: flex; flex-direction: column; overflow: hidden;
  background: #171717; color: #dedede;
  font: 400 8px/12px Inter, Roboto, sans-serif;
}
button, input, select { font: inherit; color: inherit; border: 0; margin: 0; padding: 0; background: none; border-radius: 0; min-width: 0; }
button { display: inline-flex; align-items: center; justify-content: center; white-space: nowrap; }
h1, h2, p, ul, fieldset, legend { margin: 0; padding: 0; border: 0; font-size: inherit; font-weight: inherit; }
svg { display: block; flex: none; }
.defs { position: absolute; width: 0; height: 0; }
.i7 { width: 7px; height: 7px; }
.i8 { width: 8px; height: 8px; }
.i9 { width: 9px; height: 9px; }
.i10 { width: 10px; height: 10px; }
.i11 { width: 11px; height: 11px; }
.i12 { width: 12px; height: 12px; }
.chev { width: 7px; height: 7px; }

.gnome { height: 15px; flex: none; display: grid; grid-template-columns: auto 1fr auto 1fr; align-items: center; padding: 0 9px 0 10px; background: #131313; color: #dedede; font-family: "Open Sans", "Noto Sans", sans-serif; font-weight: 600; }
.gnome-app { justify-self: start; gap: 3px; margin-left: 21px; }
.gnome-clock { display: flex; align-items: center; gap: 9px; padding-right: 14px; }
.gnome-status { justify-self: end; display: flex; gap: 7px; }

.titlebar { height: 14px; flex: none; display: grid; grid-template-columns: 1fr auto 1fr; align-items: center; background: #070604; color: #fff; font: bold 10px/14px "DejaVu Sans", sans-serif; }
.titlebar h1 { grid-column: 2; }
.win { justify-self: end; display: flex; gap: 9px; padding-right: 5px; }

.topbar { height: 18px; flex: none; display: flex; align-items: center; padding: 0 7px; background: #1b1b1b; }
.logo { width: 12px; height: 12px; }
.menus { display: flex; gap: 10px; margin-left: 6px; }
.tabs { display: flex; align-self: flex-end; margin-left: 10px; flex: 1; min-width: 0; color: #a4a4a4; }
.tabs button { height: 14px; padding: 0 6px; }
.tabs .on { background: #303030; color: #fff; border-radius: 3px 3px 0 0; }
.idblock { width: 134px; height: 14px; flex: none; display: flex; background: #1f1f1f; border-radius: 3px; outline: 1px solid #2b2b2b; margin-left: 4px; }
.idblock input { flex: 1; padding-left: 5px; }
.id-type { width: 22px; gap: 1px; background: #282828; border-radius: 3px 0 0 3px; }
.idblock button:not(.id-type) { width: 14px; }
.ghost { color: #666; }
.lit { background: #4a4a4a; color: #c9c9c9; }

.workspace { flex: 1; min-height: 0; display: grid; grid-template-columns: minmax(0, 1fr) 187px; gap: 2px; padding-top: 1px; }
.left { display: grid; grid-template-rows: minmax(0, 1fr) 56px; gap: 2px; }
.right { display: grid; grid-template-rows: 172px minmax(0, 1fr); gap: 2px; min-width: 0; }
.area { position: relative; overflow: hidden; border-radius: 4px; }

.box { height: 13px; background: #282828; border-radius: 3px; gap: 2px; padding: 0 2px; }
.wide { width: 21px; }
.arrow { width: 14px; }
.dim { color: #6a6a6a; background: #303030; }
.sq { width: 13px; height: 13px; }
.blue { background: #4772b3; color: #fff; }
.pair { display: flex; }
.vmenus { display: flex; gap: 11px; }

.viewport { background: #3d3d3d; }
.scene { position: absolute; inset: 0; width: 100%; height: 100%; }
.gl { stroke: #474747; fill: none; }
.gl.major { stroke: #505050; }
.spiral { fill: none; stroke: #e6ac33; stroke-width: 1.3; }
.pts { fill: #ff8500; }
.vheader { position: relative; height: 18px; display: flex; align-items: center; padding: 0 4px 0 7px; background: rgba(48, 48, 48, .88); }
.mode { width: 75px; margin: 0 9px 0 5px; justify-content: space-between; padding-right: 1px; }
.vmid { position: absolute; left: 45.5%; display: flex; gap: 5px; }
.orient { width: 54px; justify-content: space-between; }
.vmid .pair .box { width: 22px; }
.vright { display: flex; gap: 4px; margin-left: auto; }
.gapped { margin: 0 1px 0 5px; }
.xr { margin-left: 3px; }
.selmodes { position: absolute; top: 18px; left: 0; display: flex; padding: 2px 6px; background: rgba(48, 48, 48, .5); border-radius: 0 0 4px 0; }
.selmodes button { width: 13px; height: 13px; background: #4a4a4a; }
.selmodes svg { width: 12px; height: 12px; }
.selmodes .on { background: #4772b3; }
.viewtext { position: absolute; left: 74px; top: 41px; display: grid; color: #fff; font-weight: 500; }

.tools { position: absolute; left: 6px; top: 41px; display: grid; gap: 5px; }
.tgroup { display: grid; grid-template-columns: 27px 27px; column-gap: 1px; }
.tgroup button { height: 23px; background: #252525; border-radius: 2px; }
.tgroup button:nth-child(n+3) { border-top: 1px solid #353535; }
.tgroup button.on { background: #4772b3; }
.tgroup svg { width: 27px; height: 23px; }

.oppanel { position: absolute; left: 72px; top: 91px; width: 195px; padding: 1px 5px 5px; display: grid; gap: 1px; background: #181818; border-radius: 3px; color: #e2e2e2; }
.oppanel h2 { display: flex; align-items: center; gap: 6px; height: 13px; margin-bottom: 7px; color: #adadad; }
.oppanel p, .prop1 label { color: #a0a0a0; }
.oppanel p { height: 14px; line-height: 14px; }
.row { display: flex; height: 14px; }
.row select { flex: 1; appearance: none; padding: 0 4px; border-radius: 3px; border: 1px solid #353535; background: #252525 url("data:image/svg+xml,%3Csvg xmlns='http://www.w3.org/2000/svg' viewBox='0 0 8 8'%3E%3Cpath d='M1.300 2.600 4 5.300l2.700-2.700' fill='none' stroke='%23ccc' stroke-width='1.200'/%3E%3C/svg%3E") no-repeat right 1px center / 7px 7px; }
.preset { margin-bottom: 1px; }
.preset select { border-radius: 3px 0 0 3px; }
.preset button { width: 14px; background: #4d4d4d; border-left: 1px solid #3a3a3a; }
.preset button:last-child { border-radius: 0 3px 3px 0; }
.prop1 label { width: 46px; line-height: 14px; white-space: nowrap; }
.nums { display: grid; border-radius: 3px; overflow: hidden; }
.nums label { display: flex; align-items: center; height: 14px; padding: 0 10px 0 11px; background: #545454; border-bottom: 1px solid #444; }
.nums label:last-child { border-bottom: 0; }
.nums input { flex: 1; width: 40px; text-align: right; }
.oppanel fieldset { border: 1px solid #2a2a2a; border-radius: 3px; padding: 2px; margin: 1px 0; min-width: 0; }
.oppanel legend { float: left; width: 100%; height: 19px; line-height: 13px; padding-left: 1px; }
.oppanel fieldset .nums { clear: both; }
.seg { display: flex; height: 14px; border-radius: 3px; overflow: hidden; gap: 1px; background: #3c3c3c; }
.seg button { flex: 1; background: #545454; }
.seg .on { background: #4772b3; color: #fff; }
.check { display: flex; align-items: center; gap: 2px; height: 14px; color: #a0a0a0; }
.lit-text { color: #f0f0f0; }
input[type="checkbox"] { appearance: none; width: 10px; height: 10px; border-radius: 2px; background: #545454; display: grid; justify-items: center; align-items: start; padding-top: 1px; flex: none; }
input[type="checkbox"]:checked { background: #4772b3; }
input[type="checkbox"]:checked::after { content: ""; width: 4px; height: 6px; border: solid #fff; border-width: 0 1px 1px 0; transform: rotate(40deg); }

.navgizmo { position: absolute; top: 40px; right: 4px; width: 60px; height: 60px; }
.axis { font: bold 8px Inter, sans-serif; text-anchor: middle; fill: #181818; }
.navbtns { position: absolute; top: 99px; right: 5px; display: grid; gap: 2px; }
.navbtns button { width: 19px; height: 19px; border-radius: 50%; background: #262626; color: #eee; }
.navbtns button > svg:not(.i12) { width: 19px; height: 19px; }
.expander { position: absolute; top: 42px; right: 0; width: 4px; height: 16px; background: #303030; }
.expander svg { width: 4px; height: 8px; }

.timeline { background: #1d1d1d; display: flex; flex-direction: column; }
.theader { height: 17px; display: flex; align-items: center; padding: 0 5px 0 7px; background: #303030; }
.tdrops { display: flex; margin: 0 6px 0 4px; }
.tdrops .box { gap: 4px; padding: 0 1px 0 5px; }
.transport { position: absolute; left: 42.7%; display: flex; }
.rec { width: 14px; height: 13px; border-radius: 3px; }
.play { display: flex; margin-left: 4px; border-radius: 3px; overflow: hidden; gap: 1px; }
.play button { width: 13px; height: 13px; background: #4d4d4d; }
.play svg { width: 14px; height: 14px; }
.frames { margin-left: auto; display: flex; gap: 4px; }
.cur { width: 51px; height: 13px; background: #545454; border-radius: 3px; text-align: center; }
.range { display: flex; gap: 1px; border-radius: 3px; overflow: hidden; }
.range > * { background: #4d4d4d; height: 13px; }
.range button { width: 14px; }
.range label { display: flex; align-items: center; justify-content: space-between; width: 65px; padding: 0 10px; }
.range label:last-child { width: 58px; }
.range input { width: 24px; text-align: right; }
.ruler, .lines { display: grid; grid-template-columns: repeat(22, minmax(0, 1fr)); padding: 0 15px 0 23px; }
.ruler { height: 16px; line-height: 16px; text-align: center; color: #a8a8a8; font-size: 9px; }
.track { position: relative; flex: 1; background: linear-gradient(90deg, #242424 18.2%, #303030 18.2%); }
.lines { height: 100%; }
.lines i { border-left: 1px solid #292929; background: linear-gradient(#1f1f1f, #1f1f1f) center / 1px 100% no-repeat; }
.keybar { position: absolute; left: 12.7%; width: 28.1%; top: 5px; height: 4px; background: #9a6216; }
.key { position: absolute; top: 3px; width: 8px; height: 8px; }
.first { left: 12.2%; }
.last { left: 40.5%; }
.tscroll { position: absolute; left: 6px; width: 72.6%; bottom: 1px; height: 6px; border-radius: 3px; background: radial-gradient(circle at 3px 3px, #2b2b2b 2px, transparent 2px), radial-gradient(circle at calc(100% - 3px) 3px, #2b2b2b 2px, transparent 2px), #545454; }
.playhead { position: absolute; top: 19px; bottom: 0; left: 17%; width: 16px; background: linear-gradient(#4772b3, #4772b3) center / 2px 100% no-repeat; }
.playhead span { display: block; height: 12px; border-radius: 2px; background: #4772b3; color: #fff; text-align: center; font-size: 9px; }

.outliner { background: #282828; }
.oheader, .pheader { height: 18px; display: flex; align-items: center; padding-left: 7px; background: #2b2b2b; }
.oheader .box + .box { margin-left: 5px; }
.search { display: flex; align-items: center; height: 13px; background: #1d1d1d; border-radius: 3px; padding-left: 3px; color: #ccc; }
.search input { flex: 1; width: 20px; }
.oheader .search { width: 81px; margin: 0 11px; }
.cut { width: 4px; height: 13px; margin-left: auto; background: #4a4a4a; border-radius: 3px 0 0 3px; }
.tree { list-style: none; }
.tree li { height: 14px; display: flex; align-items: center; padding-right: 9px; color: #d8d8d8; }
.tree li:nth-child(even) { background: #2b2b2b; }
.gut { width: 14px; display: grid; place-items: center; flex: none; }
.tri { width: 14px; text-align: center; font: 6px/14px "DejaVu Sans", sans-serif; flex: none; }
.tree .i12 { margin-right: 4px; padding: 1px; border-radius: 3px; }
.tree .i12:not(.data) { margin-left: 1px; }
.tree .hl { background: rgba(255, 255, 255, .2); }
.child .tri { width: 28px; padding-left: 14px; }
.nm { white-space: nowrap; flex: none; }
.tg { margin-left: auto; display: flex; align-items: center; gap: 4px; flex: none; color: #e0e0e0; }
.tree input[type="checkbox"] { width: 8px; height: 8px; background: #ddd; margin-right: 1px; border-radius: 1px; padding-top: 0; }
.tree input[type="checkbox"]:checked::after { border-color: #222; }
.or { color: #d08b4f; }
.off .tri, .off .nm, .off > .i12 { color: #6d6d6d; }
.counts { display: flex; align-items: center; margin-left: 16px; color: #8a5a35; }
.counts small { font-size: 7px; line-height: 9px; align-self: end; color: #aaa; }
.off .tg .i10:nth-of-type(1) { color: #777; }
.tree li.sel { background: #334d80; }
.sel .nm { color: #eda13a; }
.tree .data { margin-left: 17px; color: #10c79a; background: rgba(255, 255, 255, .12); }
.oscroll { position: absolute; left: 6px; bottom: 2px; width: 140px; height: 2px; background: #474747; }

.properties { background: #303030; display: flex; flex-direction: column; }
.pheader { background: #303030; padding-right: 7px; }
.pheader .search { width: 80px; margin-left: 22px; }
.pheader .arrow { margin-left: auto; }
.pbody { flex: 1; display: flex; min-height: 0; }
.ptabs { width: 20px; background: #1c1c1c; padding: 4px 0 0 1px; display: flex; flex-direction: column; color: #bdbdbd; border-radius: 0 3px 0 0; }
.ptabs button { height: 20px; flex: none; border-radius: 3px 0 0 3px; }
.ptabs .sp { margin-top: 4px; }
.ptabs .on { background: #303030; color: #6f9ff5; }
.ptabs .red { color: #c05a62; }
.ptabs .orange { color: #d98642; }
.ptabs .bl { color: #5f86d8; }
.ptabs .green { color: #17a37c; }
.pcontent { flex: 1; padding: 6px 6px 0; }
.crumb { display: flex; align-items: center; gap: 6px; height: 12px; padding-left: 2px; }
.pn { margin-left: auto; color: #999; margin-right: 1px; }
.addmod { width: 100%; height: 13px; margin-top: 13px; padding: 0 5px; background: #545454; border-radius: 3px; color: #eaeaea; }
.addmod span { flex: 1; text-align: center; }

.status { height: 15px; flex: none; display: grid; grid-template-columns: 158px 158px 158px 1fr; align-items: center; padding: 0 9px 0 8px; background: #181818; color: #a0a0a0; }
.status span { display: flex; align-items: center; gap: 8px; }
.status .m { width: 8px; height: 11px; }
.status .ver { justify-self: end; }
```

FILE: app.js
```js
const NS = 'http://www.w3.org/2000/svg';
const view = document.getElementById('scene-view');

function add(tag, attrs) {
  const el = document.createElementNS(NS, tag);
  for (const k in attrs) el.setAttribute(k, attrs[k]);
  view.appendChild(el);
  return el;
}

/* World origin and pixels per metre in the view. */
const origin = { x: 491.4, y: 254.7 };
const unit = 20.75;

function gridPath(major) {
  let d = '';
  for (let k = -60; k <= 60; k++) {
    if ((k % 10 === 0) !== major) continue;
    d += `M${origin.x + k * unit} -400V900M-700 ${origin.y + k * unit}H1600`;
  }
  return d;
}
const crisp = { 'shape-rendering': 'crispEdges' };
add('path', { class: 'gl', d: gridPath(false), ...crisp });
add('path', { class: 'gl major', d: gridPath(true), ...crisp });
add('path', { d: `M-700 ${origin.y}H1600`, stroke: '#913643', ...crisp });
add('path', { d: `M${origin.x} -400V900`, stroke: '#5c7a29', ...crisp });

/* Archimedean spiral: radius 1, growth 2 per turn, 36 steps per turn, 5 turns. */
const steps = 36, turns = 5, pts = [];
for (let i = 0; i <= steps * turns + 1; i++) {
  const a = i * 2 * Math.PI / steps;
  const r = (1 + 2 * i / steps) * unit;
  pts.push([origin.x + r * Math.cos(a), origin.y - r * Math.sin(a)]);
}
add('polyline', { class: 'spiral', points: pts.map(p => p.map(n => n.toFixed(2)).join()).join(' ') });
const dot = 1.5;
add('path', {
  class: 'pts',
  d: pts.map(([x, y]) => `M${(x - dot).toFixed(2)} ${(y - dot).toFixed(2)}h3v3h-3z`).join('')
});
add('rect', { x: pts[0][0] - 1.5, y: pts[0][1] - 1.5, width: 3, height: 3, fill: '#fff' });
add('circle', { cx: origin.x, cy: origin.y, r: 1, fill: '#ffa028', stroke: '#222', 'stroke-width': 0.5 });
add('circle', { cx: origin.x, cy: origin.y - 18, r: 1.3, fill: '#222' });

const ruler = document.getElementById('ruler');
const lines = document.getElementById('lines');
for (let f = -30; f <= 180; f += 10) {
  const label = document.createElement('span');
  if (f !== 0) label.textContent = f;
  ruler.appendChild(label);
  lines.appendChild(document.createElement('i'));
}
```
